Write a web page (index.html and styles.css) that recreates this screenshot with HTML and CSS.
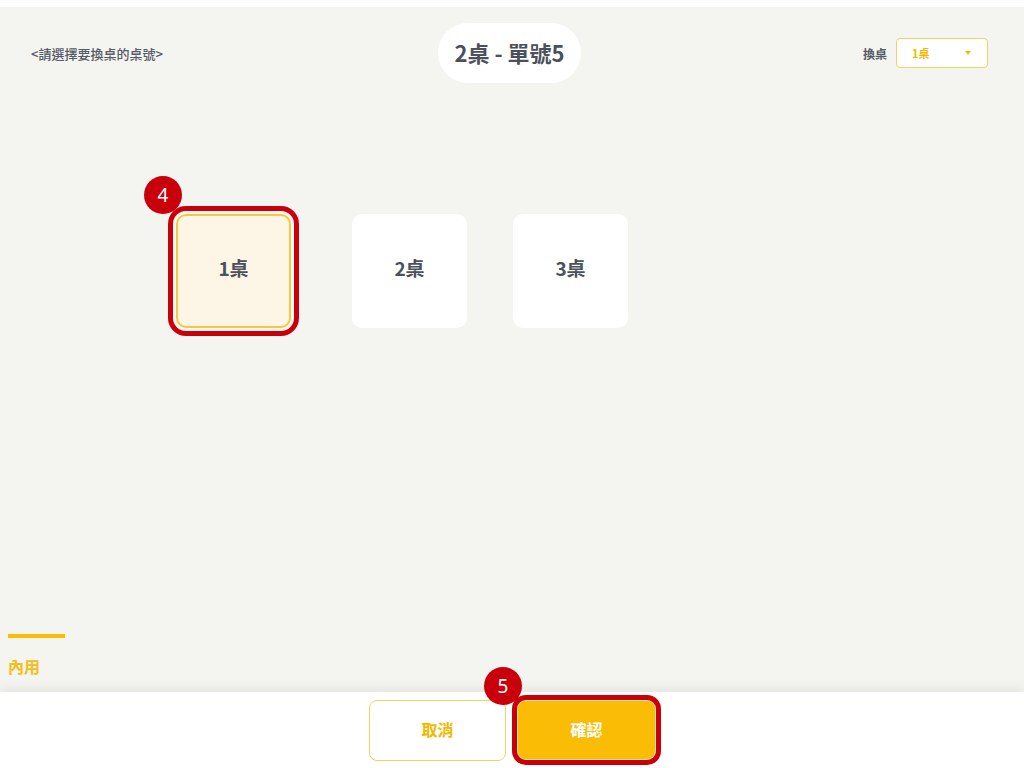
FILE: index.html
```html
<!DOCTYPE html>
<html lang="zh-Hant">

<head>
    <meta charset="UTF-8">
    <meta name="viewport" content="width=device-width, initial-scale=1.0">
    <title>換桌</title>
    <link rel="stylesheet" href="styles.css">
</head>

<body>
    <div class="main">
        <div class="header">
            <div class="hint">&lt;請選擇要換桌的桌號&gt;</div>
            <div class="title">2桌 - 單號5</div>
            <div class="switch">
                <span class="switch-label">換桌</span>
                <div class="select">
                    <span>1桌</span>
                    <i class="caret"></i>
                </div>
            </div>
        </div>

        <div class="tables">
            <div class="table-card selected">
                1桌
                <span class="step step-4">4</span>
            </div>
            <div class="table-card">2桌</div>
            <div class="table-card">3桌</div>
        </div>

        <div class="tab">
            <div class="tab-line"></div>
            <div class="tab-text">內用</div>
        </div>
    </div>

    <div class="footer">
        <button class="btn btn-cancel">取消</button>
        <button class="btn btn-confirm">
            確認
            <span class="step step-5">5</span>
        </button>
    </div>
</body>

</html>
```

FILE: styles.css
```css
/* 顏色 */
:root {
    --bg: #f4f4f0;
    --text: #4b515c;
    --yellow: #fbbc05;
    --yellow-line: #f6d061;
    --mark: #c9000b;
}

html,
body {
    margin: 0;
    height: 100%;
}

body {
    background: #ffffff;
    font-family: "Noto Sans CJK TC", "Noto Sans", sans-serif;
    color: var(--text);
    display: flex;
    flex-direction: column;
    padding-top: 7px;
    box-sizing: border-box;
}

.main {
    height: 685px;
    background: var(--bg);
    display: flex;
    flex-direction: column;
}

/* 頂部 */
.header {
    display: grid;
    grid-template-columns: 1fr auto 1fr;
    align-items: center;
    padding: 16px 36px 0 31px;
}

.hint {
    font-size: 13px;
    font-weight: 500;
    color: #555a65;
}

.title {
    height: 60px;
    padding: 0 16px 2px;
    box-sizing: border-box;
    border-radius: 30px;
    background: #ffffff;
    font-size: 22px;
    font-weight: 700;
    display: flex;
    align-items: center;
}

.switch {
    justify-self: end;
    display: flex;
    align-items: center;
    gap: 9px;
}

.switch-label {
    font-size: 12px;
    font-weight: 700;
    color: #555a65;
}

.select {
    width: 92px;
    height: 30px;
    box-sizing: border-box;
    border: 1.5px solid var(--yellow-line);
    border-radius: 4px;
    background: #ffffff;
    display: flex;
    align-items: center;
    justify-content: space-between;
    padding: 0 16px 0 15px;
    font-size: 11px;
    font-weight: 700;
    color: #f3b800;
}

.caret {
    width: 0;
    height: 0;
    border-left: 3px solid transparent;
    border-right: 3px solid transparent;
    border-top: 4px solid #f3b800;
}

/* 桌號 */
.tables {
    display: flex;
    margin: 131px 0 0 176px;
    gap: 46px;
}

.table-card {
    position: relative;
    width: 115px;
    height: 114px;
    padding-bottom: 8px;
    box-sizing: border-box;
    border-radius: 10px;
    background: #ffffff;
    display: flex;
    align-items: center;
    justify-content: center;
    font-size: 19px;
    font-weight: 700;
}

.table-card.selected {
    margin-right: 15px;
    background: #fdf5e6;
    border: 2px solid #f6c842;
    box-shadow: 0 0 0 3px #fbf7f2, 0 0 0 8px var(--mark);
}

.step {
    position: absolute;
    width: 38px;
    height: 38px;
    border-radius: 50%;
    background: var(--mark);
    color: #ffffff;
    font-family: "Noto Sans", sans-serif;
    font-size: 19px;
    font-weight: 400;
    display: flex;
    align-items: center;
    justify-content: center;
}

.step-4 {
    left: -34px;
    top: -40px;
}

.step-5 {
    left: -34px;
    top: -34px;
}

/* 內用 */
.tab {
    margin-top: auto;
    padding: 0 0 14px 8px;
}

.tab-line {
    width: 57px;
    height: 4px;
    background: var(--yellow);
}

.tab-text {
    margin-top: 16px;
    font-size: 16px;
    font-weight: 700;
    color: #f6bd16;
}

/* 底部按鈕 */
.footer {
    flex: 1;
    background: #ffffff;
    box-shadow: 0 -5px 10px rgba(0, 0, 0, 0.06);
    display: flex;
    justify-content: center;
    align-items: center;
    gap: 12px;
}

.btn {
    position: relative;
    width: 137px;
    height: 61px;
    padding-bottom: 3px;
    border-radius: 8px;
    font-family: "Noto Sans CJK TC", sans-serif;
    font-size: 16px;
    font-weight: 700;
    cursor: pointer;
}

.btn-cancel {
    background: #ffffff;
    border: 1.5px solid var(--yellow-line);
    color: #f3b800;
}

.btn-confirm {
    height: 58px;
    background: var(--yellow);
    border: none;
    color: #ffffff;
    box-shadow: 0 0 0 1px #fde9a8, 0 0 0 6px var(--mark);
}
```
